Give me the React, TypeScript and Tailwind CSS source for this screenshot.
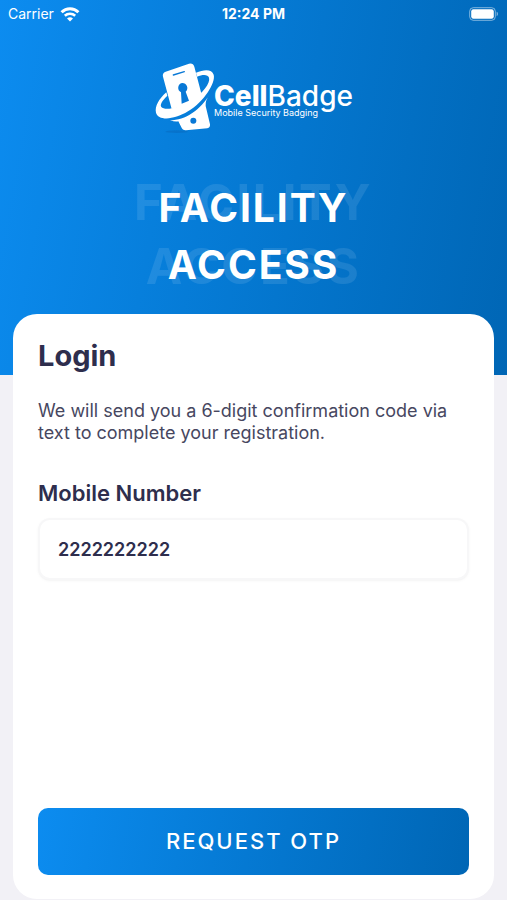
import { useState } from "react";

function WifiIcon() {
  return (
    <svg viewBox="0 0 20 15" className="h-[15px] w-5" fill="none" aria-hidden="true">
      <path d="M1.6 5.2a12 12 0 0 1 16.8 0" stroke="white" strokeWidth="3" />
      <path d="M4.8 8.8a7.6 7.6 0 0 1 10.4 0" stroke="white" strokeWidth="2.6" />
      <path d="M10 14.6 7 11.6a4.4 4.4 0 0 1 6 0Z" fill="white" />
    </svg>
  );
}

function BatteryIcon() {
  return (
    <svg viewBox="0 0 30 14" className="h-[14px] w-[30px]" aria-hidden="true">
      <rect x="0.7" y="0.7" width="25.6" height="12.6" rx="3.6" fill="none" stroke="white" strokeOpacity="0.5" />
      <rect x="2.2" y="2.2" width="22.6" height="9.6" rx="2.2" fill="white" />
      <path d="M27.6 4.8c1.8.6 1.8 3.8 0 4.4Z" fill="white" fillOpacity="0.5" />
    </svg>
  );
}

function BadgeMark() {
  return (
    <svg viewBox="40 38 186 222" className="h-[74px] w-[62px]" aria-hidden="true">
      <ellipse cx="108" cy="247" rx="34" ry="4" fill="#0a5fae" fillOpacity="0.35" />
      {/* phone, upper half */}
      <path
        d="M67 82Q64 71 75 67L145 43Q157 40 161 52L183 136Q148 170 93 179Z"
        fill="white"
      />
      <path d="M98 77 131 67" stroke="#0878d6" strokeWidth="4" strokeLinecap="round" />
      <path
        d="M124 101a15 15 0 0 1 11 26l10 27-22 9-2-34a15 15 0 0 1 3-28Z"
        fill="#0878d6"
      />
      {/* orbit */}
      <path
        d="M166 70C191 59 214 59 219 76C226 100 190 157 142 186C99 213 52 214 46 190C42 172 54 149 77 129L80 139C65 153 57 166 62 173C71 184 112 178 151 155C186 133 210 100 205 85C202 75 187 74 169 82Z"
        fill="white"
      />
      {/* phone, lower half */}
      <path
        d="M88 213C134 213 181 181 207 134Q193 155 195 170L208 225Q209 235 200 237L136 243Q126 244 122 234L113 216Q103 218 88 213Z"
        fill="white"
      />
      <circle cx="158" cy="214" r="9" fill="#0878d6" />
    </svg>
  );
}

function StatusBar() {
  return (
    <div className="grid grid-cols-3 items-center px-2 pt-1 text-sm">
      <div className="flex items-center gap-1.5">
        <span>Carrier</span>
        <WifiIcon />
      </div>
      <span className="text-center font-bold">12:24 PM</span>
      <div className="flex justify-end">
        <BatteryIcon />
      </div>
    </div>
  );
}

export default function App() {
  const [mobile, setMobile] = useState("2222222222");

  return (
    <main className="flex min-h-screen flex-col bg-[#f2f1f6] pb-px font-['Inter',sans-serif] text-[#2e2e4d]">
      <header className="bg-linear-100 from-[#0c8cf0] to-[#0066b5] pb-[82px] text-white">
        <StatusBar />

        <div className="mt-[38px] flex items-start justify-center">
          <BadgeMark />
          <div className="-ml-0.5 pt-[22px]">
            <p className="text-[28px] leading-6">
              <span className="font-extrabold">Cell</span>
              <span className="font-medium">Badge</span>
            </p>
            <p className="text-[9px] leading-[10px]">Mobile Security Badging</p>
          </div>
        </div>

        <div className="relative mt-[43px] text-center font-bold">
          <p
            aria-hidden="true"
            className="absolute inset-x-0 -top-2 text-[49px] leading-16 tracking-wider text-white/10"
          >
            FACILITY
            <br />
            ACCESS
          </p>
          <h1 className="relative text-[39px] leading-[57px] tracking-wider">
            FACILITY
            <br />
            ACCESS
          </h1>
        </div>
      </header>

      <form
        className="relative mx-[13px] -mt-[61px] flex flex-1 flex-col rounded-3xl bg-white px-[25px] pt-6 pb-6"
        onSubmit={(e) => e.preventDefault()}
      >
        <h2 className="text-[29px] leading-9 font-bold">Login</h2>
        <p className="mt-[26px] text-lg leading-[22px] text-[#47475f]">
          We will send you a 6-digit confirmation code via text to complete your
          registration.
        </p>

        <label htmlFor="mobile" className="mt-[35px] text-[22px] leading-7 font-semibold">
          Mobile Number
        </label>
        <input
          id="mobile"
          type="tel"
          value={mobile}
          onChange={(e) => setMobile(e.target.value)}
          className="mt-[11px] h-[62px] w-full rounded-xl border-2 border-[#f7f7f8] bg-white px-[18px] text-lg font-semibold shadow-sm shadow-black/4 outline-none"
        />

        <button
          type="submit"
          className="mt-auto h-[67px] w-full rounded-[10px] bg-linear-100 from-[#0c8cf0] to-[#0066b5] text-[22px] font-medium tracking-[2px] text-white"
        >
          REQUEST OTP
        </button>
      </form>
    </main>
  );
}
